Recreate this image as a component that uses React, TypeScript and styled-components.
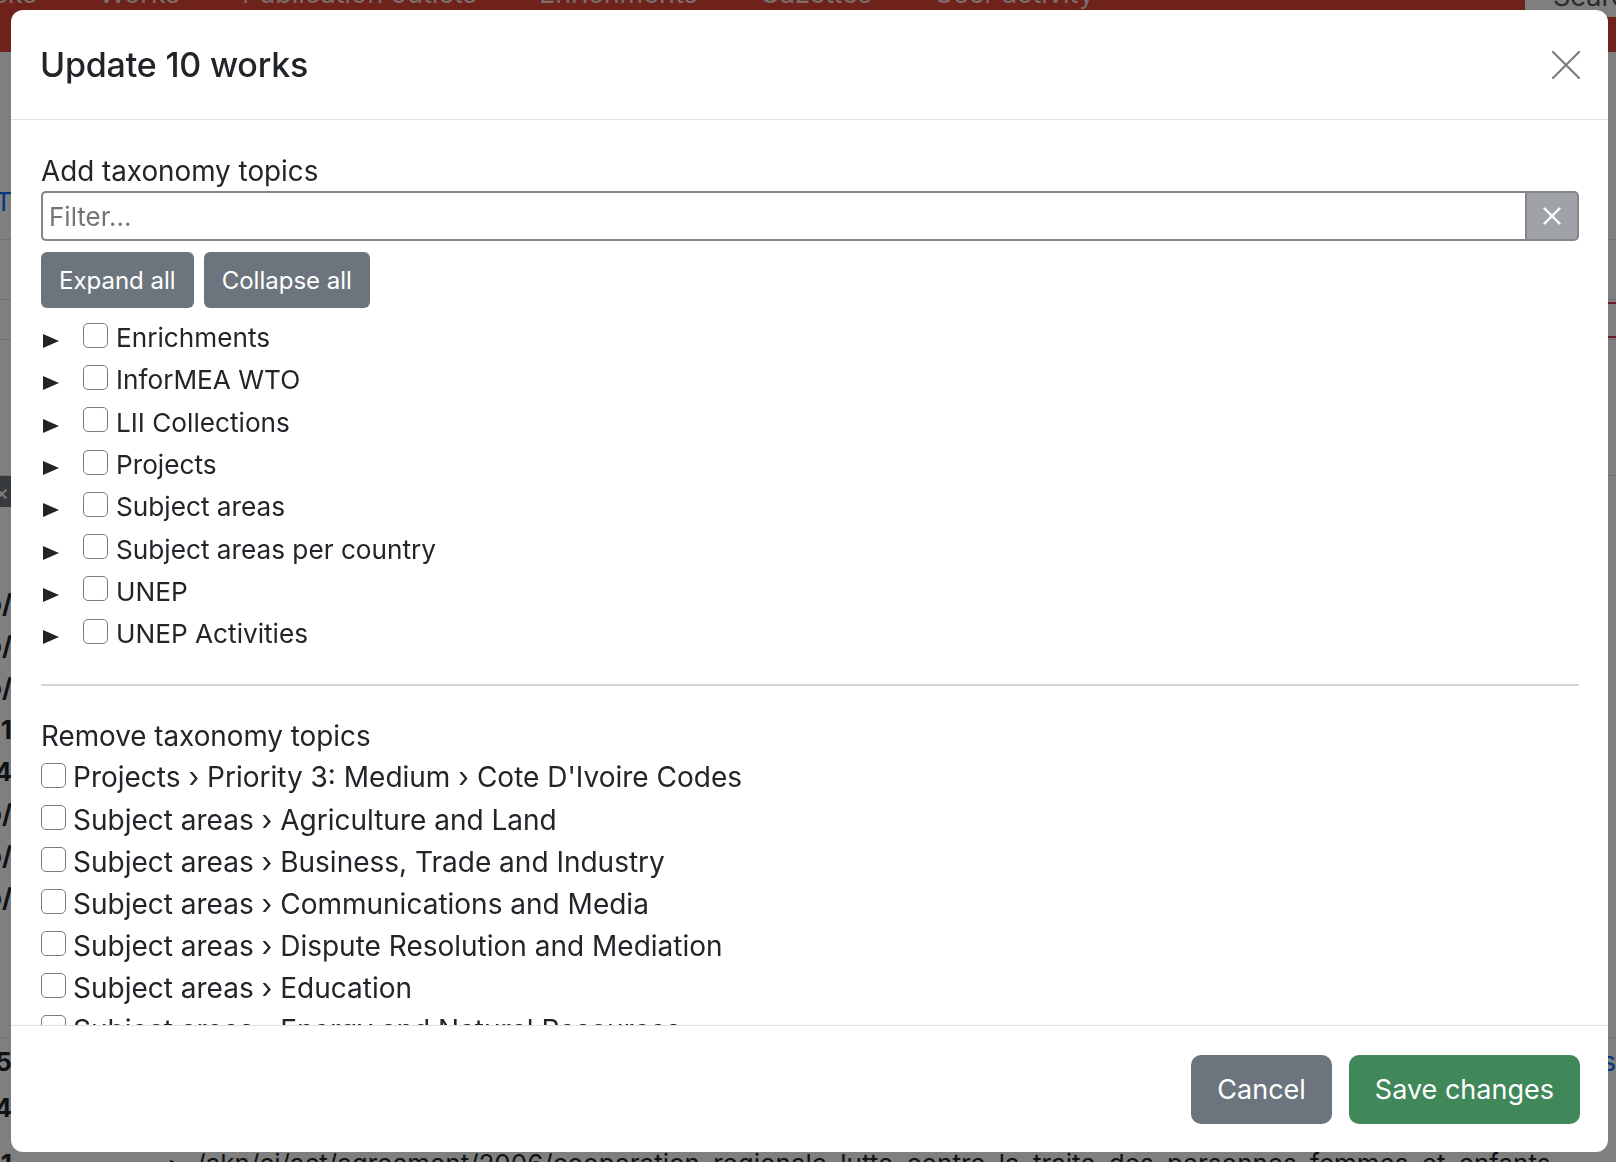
import React from 'react';
import styled, { createGlobalStyle } from 'styled-components';

const GlobalStyle = createGlobalStyle`
  html, body {
    margin: 0;
    padding: 0;
  }
  body {
    font-family: Inter, "Noto Sans", "Liberation Sans", sans-serif;
    color: #212529;
    overflow: hidden;
  }
  * {
    box-sizing: border-box;
  }
`;

// ---- page behind the dialog ----

const Page = styled.div`
  width: 1616px;
  height: 1162px;
  overflow: hidden;
  background: #ffffff;
`;

const NavBar = styled.div`
  margin-top: -40px;
  height: 92px;
  background: #dc4433;
  display: flex;
  align-items: flex-start;
  padding-top: 19px;
`;

const NavList = styled.div`
  display: flex;
  gap: 62px;
  margin-left: -37px;
  flex: 1;
`;

const NavItem = styled.span`
  font-size: 27px;
  line-height: 30px;
  color: rgba(255, 255, 255, 0.82);
  white-space: nowrap;
`;

const SearchBox = styled.div`
  width: 91px;
  height: 57px;
  margin-top: -19px;
  background: #ffffff;
  border-radius: 6px 0 0 6px;
  padding: 22px 0 0 28px;
  font-size: 27px;
  line-height: 30px;
  color: #555;
  overflow: hidden;
  white-space: nowrap;
`;

const Content = styled.div`
  display: flex;
  flex-direction: column;
`;

const Row = styled.div<{ h: number; line?: boolean }>`
  height: ${p => p.h}px;
  flex-shrink: 0;
  display: flex;
  align-items: center;
  justify-content: space-between;
  border-bottom: ${p => (p.line ? '1px solid #dee2e6' : 'none')};
`;

const Clip = styled.div`
  width: 12px;
  flex-shrink: 0;
  overflow: hidden;
  display: flex;
  justify-content: flex-end;
  white-space: nowrap;
  font-size: 26px;
  font-weight: 700;
  color: #212529;
`;

const LinkText = styled.span`
  color: #0d6efd;
  font-weight: 400;
  font-size: 26px;
`;

const DarkChip = styled.div`
  width: 40px;
  height: 31px;
  flex-shrink: 0;
  background: #6c757d;
  color: #fff;
  font-size: 22px;
  font-weight: 400;
  display: flex;
  align-items: center;
  justify-content: flex-end;
  padding-right: 3px;
`;

const RedMark = styled.div`
  width: 12px;
  height: 36px;
  border-top: 2px solid #dc3545;
  border-bottom: 2px solid #dc3545;
  border-left: 4px solid #dc3545;
`;

const BottomRow = styled.div`
  margin-top: 18px;
  display: flex;
  align-items: flex-start;
  font-size: 26px;
  line-height: 32px;
  white-space: nowrap;
  color: #212529;
`;

const BottomPath = styled.span`
  margin-left: 158px;
  word-spacing: 6px;
`;

// ---- modal ----

const Backdrop = styled.div`
  position: fixed;
  inset: 0;
  background: rgba(0, 0, 0, 0.5);
  display: flex;
  padding: 10px 8px 10px 11px;
`;

const Modal = styled.div`
  width: 1597px;
  height: 1142px;
  background: #ffffff;
  border-radius: 12px;
  display: flex;
  flex-direction: column;
  overflow: hidden;
`;

const Header = styled.div`
  height: 110px;
  flex-shrink: 0;
  display: flex;
  align-items: center;
  justify-content: space-between;
  padding: 0 28px 0 29px;
  border-bottom: 1px solid #dee2e6;
`;

const Title = styled.h5`
  margin: 0;
  font-size: 34px;
  font-weight: 500;
  letter-spacing: -0.2px;
  color: #212529;
`;

const CloseButton = styled.button`
  width: 28px;
  height: 28px;
  padding: 0;
  border: none;
  background: transparent;
  display: flex;
  cursor: pointer;
`;

const Body = styled.div`
  flex: 1;
  overflow: hidden;
  padding: 33px 29px 0 30px;
`;

const SectionLabel = styled.div<{ gapBelow: number }>`
  font-size: 27.8px;
  line-height: 36px;
  margin-bottom: ${p => p.gapBelow}px;
`;

const InputGroup = styled.div`
  display: flex;
  height: 50px;
`;

const FilterInput = styled.input`
  flex: 1;
  min-width: 0;
  height: 100%;
  border: 2px solid #858585;
  border-right: none;
  border-radius: 5px 0 0 5px;
  padding: 0 6px;
  font-family: inherit;
  font-size: 26px;
  color: #212529;
  outline: none;
  &::placeholder {
    color: #757575;
  }
`;

const ClearButton = styled.button`
  width: 54px;
  height: 100%;
  border: 2px solid #858585;
  border-radius: 0 5px 5px 0;
  background: #9fa3a8;
  display: flex;
  align-items: center;
  justify-content: center;
  padding: 0;
  cursor: pointer;
`;

const ButtonRow = styled.div`
  display: flex;
  gap: 10px;
  margin-top: 11px;
`;

const SmallButton = styled.button`
  height: 56px;
  padding: 0 18px;
  border: none;
  border-radius: 6px;
  background: #6c757d;
  color: #ffffff;
  font-family: inherit;
  font-size: 24px;
  cursor: pointer;
`;

const Tree = styled.div`
  margin-top: 9px;
  display: flex;
  flex-direction: column;
`;

const TreeRow = styled.div`
  height: 42.3px;
  display: flex;
  align-items: center;
`;

const Caret = styled.svg`
  width: 16px;
  height: 14px;
  margin: 6px 0 0 2px;
  flex-shrink: 0;
`;

const Checkbox = styled.span<{ lift: number }>`
  width: 25px;
  height: 25px;
  flex-shrink: 0;
  border: 1.5px solid #7a7a7a;
  border-radius: 5px;
  background: #ffffff;
  margin-bottom: ${p => p.lift}px;
`;

const TreeCheckbox = styled(Checkbox)`
  margin-left: 24px;
`;

const TreeLabel = styled.span`
  margin-left: 8px;
  font-size: 26.2px;
  line-height: 36px;
  white-space: nowrap;
`;

const Divider = styled.hr`
  margin: 29px 0 32px;
  border: none;
  border-top: 2px solid #d4d5d6;
`;

const RemoveList = styled.div`
  display: flex;
  flex-direction: column;
`;

const RemoveRow = styled.div`
  height: 42.1px;
  flex-shrink: 0;
  display: flex;
  align-items: center;
`;

const RemoveLabel = styled.span`
  margin-left: 7px;
  font-size: 28px;
  line-height: 36px;
  white-space: nowrap;
`;

const Footer = styled.div`
  height: 127px;
  flex-shrink: 0;
  display: flex;
  align-items: center;
  justify-content: flex-end;
  gap: 17px;
  padding-right: 28px;
  border-top: 1px solid #dee2e6;
`;

const FooterButton = styled.button<{ variant: 'secondary' | 'success' }>`
  height: 69px;
  padding: 0 26px;
  border: none;
  border-radius: 10px;
  background: ${p => (p.variant === 'success' ? '#40875a' : '#6c757d')};
  color: #ffffff;
  font-family: inherit;
  font-size: 27px;
  cursor: pointer;
`;

const addTopics = [
  'Enrichments',
  'InforMEA WTO',
  'LII Collections',
  'Projects',
  'Subject areas',
  'Subject areas per country',
  'UNEP',
  'UNEP Activities',
];

const removeTopics = [
  "Projects › Priority 3: Medium › Cote D'Ivoire Codes",
  'Subject areas › Agriculture and Land',
  'Subject areas › Business, Trade and Industry',
  'Subject areas › Communications and Media',
  'Subject areas › Dispute Resolution and Mediation',
  'Subject areas › Education',
  'Subject areas › Energy and Natural Resources',
  'Subject areas › Environment',
];

// rows of the table behind the backdrop; only a sliver of each shows
const tableRows: { h: number; left?: React.ReactNode; right?: React.ReactNode; line?: boolean }[] = [
  { h: 130 },
  { h: 38, left: <LinkText>T</LinkText> },
  { h: 20, line: true },
  { h: 60, line: true },
  { h: 40, right: <RedMark />, line: true },
  { h: 136, line: true },
  { h: 31, left: <DarkChip>×</DarkChip> },
  { h: 75 },
  { h: 42, left: 'o/' },
  { h: 42, left: 'o/' },
  { h: 42, left: 'o/' },
  { h: 42, left: '1' },
  { h: 42, left: '4' },
  { h: 42, left: 'o/' },
  { h: 42, left: 'o/' },
  { h: 42, left: 'o/' },
  { h: 120, line: true },
  { h: 46, left: '65', right: <LinkText>s</LinkText> },
  { h: 46, left: '4' },
];

const App: React.FC = () => {
  return (
    <>
      <GlobalStyle />
      <Page>
        <NavBar>
          <NavList>
            <NavItem>Tasks</NavItem>
            <NavItem>Works</NavItem>
            <NavItem>Publication outlets</NavItem>
            <NavItem>Enrichments</NavItem>
            <NavItem>Gazettes</NavItem>
            <NavItem>User activity</NavItem>
          </NavList>
          <SearchBox>Search</SearchBox>
        </NavBar>
        <Content>
          {tableRows.map((r, i) => (
            <Row key={i} h={r.h} line={r.line}>
              <Clip>{r.left}</Clip>
              {r.right}
            </Row>
          ))}
          <BottomRow>
            <Clip>1</Clip>
            <BottomPath>▸ /akn/ci/act/agreement/2006/cooperation regionale lutte contre la traite des personnes femmes et enfants</BottomPath>
          </BottomRow>
        </Content>
      </Page>

      <Backdrop>
        <Modal>
          <Header>
            <Title>Update 10 works</Title>
            <CloseButton aria-label="Close">
              <svg width="28" height="28" viewBox="0 0 28 28">
                <path d="M1 1 L27 27 M27 1 L1 27" stroke="#7d7d7d" strokeWidth="2.2" strokeLinecap="round" />
              </svg>
            </CloseButton>
          </Header>

          <Body>
            <SectionLabel gapBelow={2}>Add taxonomy topics</SectionLabel>
            <InputGroup>
              <FilterInput placeholder="Filter..." />
              <ClearButton aria-label="Clear">
                <svg width="18" height="18" viewBox="0 0 18 18">
                  <path d="M1.5 1.5 L16.5 16.5 M16.5 1.5 L1.5 16.5" stroke="#ffffff" strokeWidth="2.4" strokeLinecap="round" />
                </svg>
              </ClearButton>
            </InputGroup>
            <ButtonRow>
              <SmallButton>Expand all</SmallButton>
              <SmallButton>Collapse all</SmallButton>
            </ButtonRow>

            <Tree>
              {addTopics.map(topic => (
                <TreeRow key={topic}>
                  <Caret viewBox="0 0 16 14">
                    <polygon points="0,0 16,7 0,14" fill="#212529" />
                  </Caret>
                  <TreeCheckbox lift={6} />
                  <TreeLabel>{topic}</TreeLabel>
                </TreeRow>
              ))}
            </Tree>

            <Divider />

            <SectionLabel gapBelow={2}>Remove taxonomy topics</SectionLabel>
            <RemoveList>
              {removeTopics.map(topic => (
                <RemoveRow key={topic}>
                  <Checkbox lift={4} />
                  <RemoveLabel>{topic}</RemoveLabel>
                </RemoveRow>
              ))}
            </RemoveList>
          </Body>

          <Footer>
            <FooterButton variant="secondary">Cancel</FooterButton>
            <FooterButton variant="success">Save changes</FooterButton>
          </Footer>
        </Modal>
      </Backdrop>
    </>
  );
};

export default App;
